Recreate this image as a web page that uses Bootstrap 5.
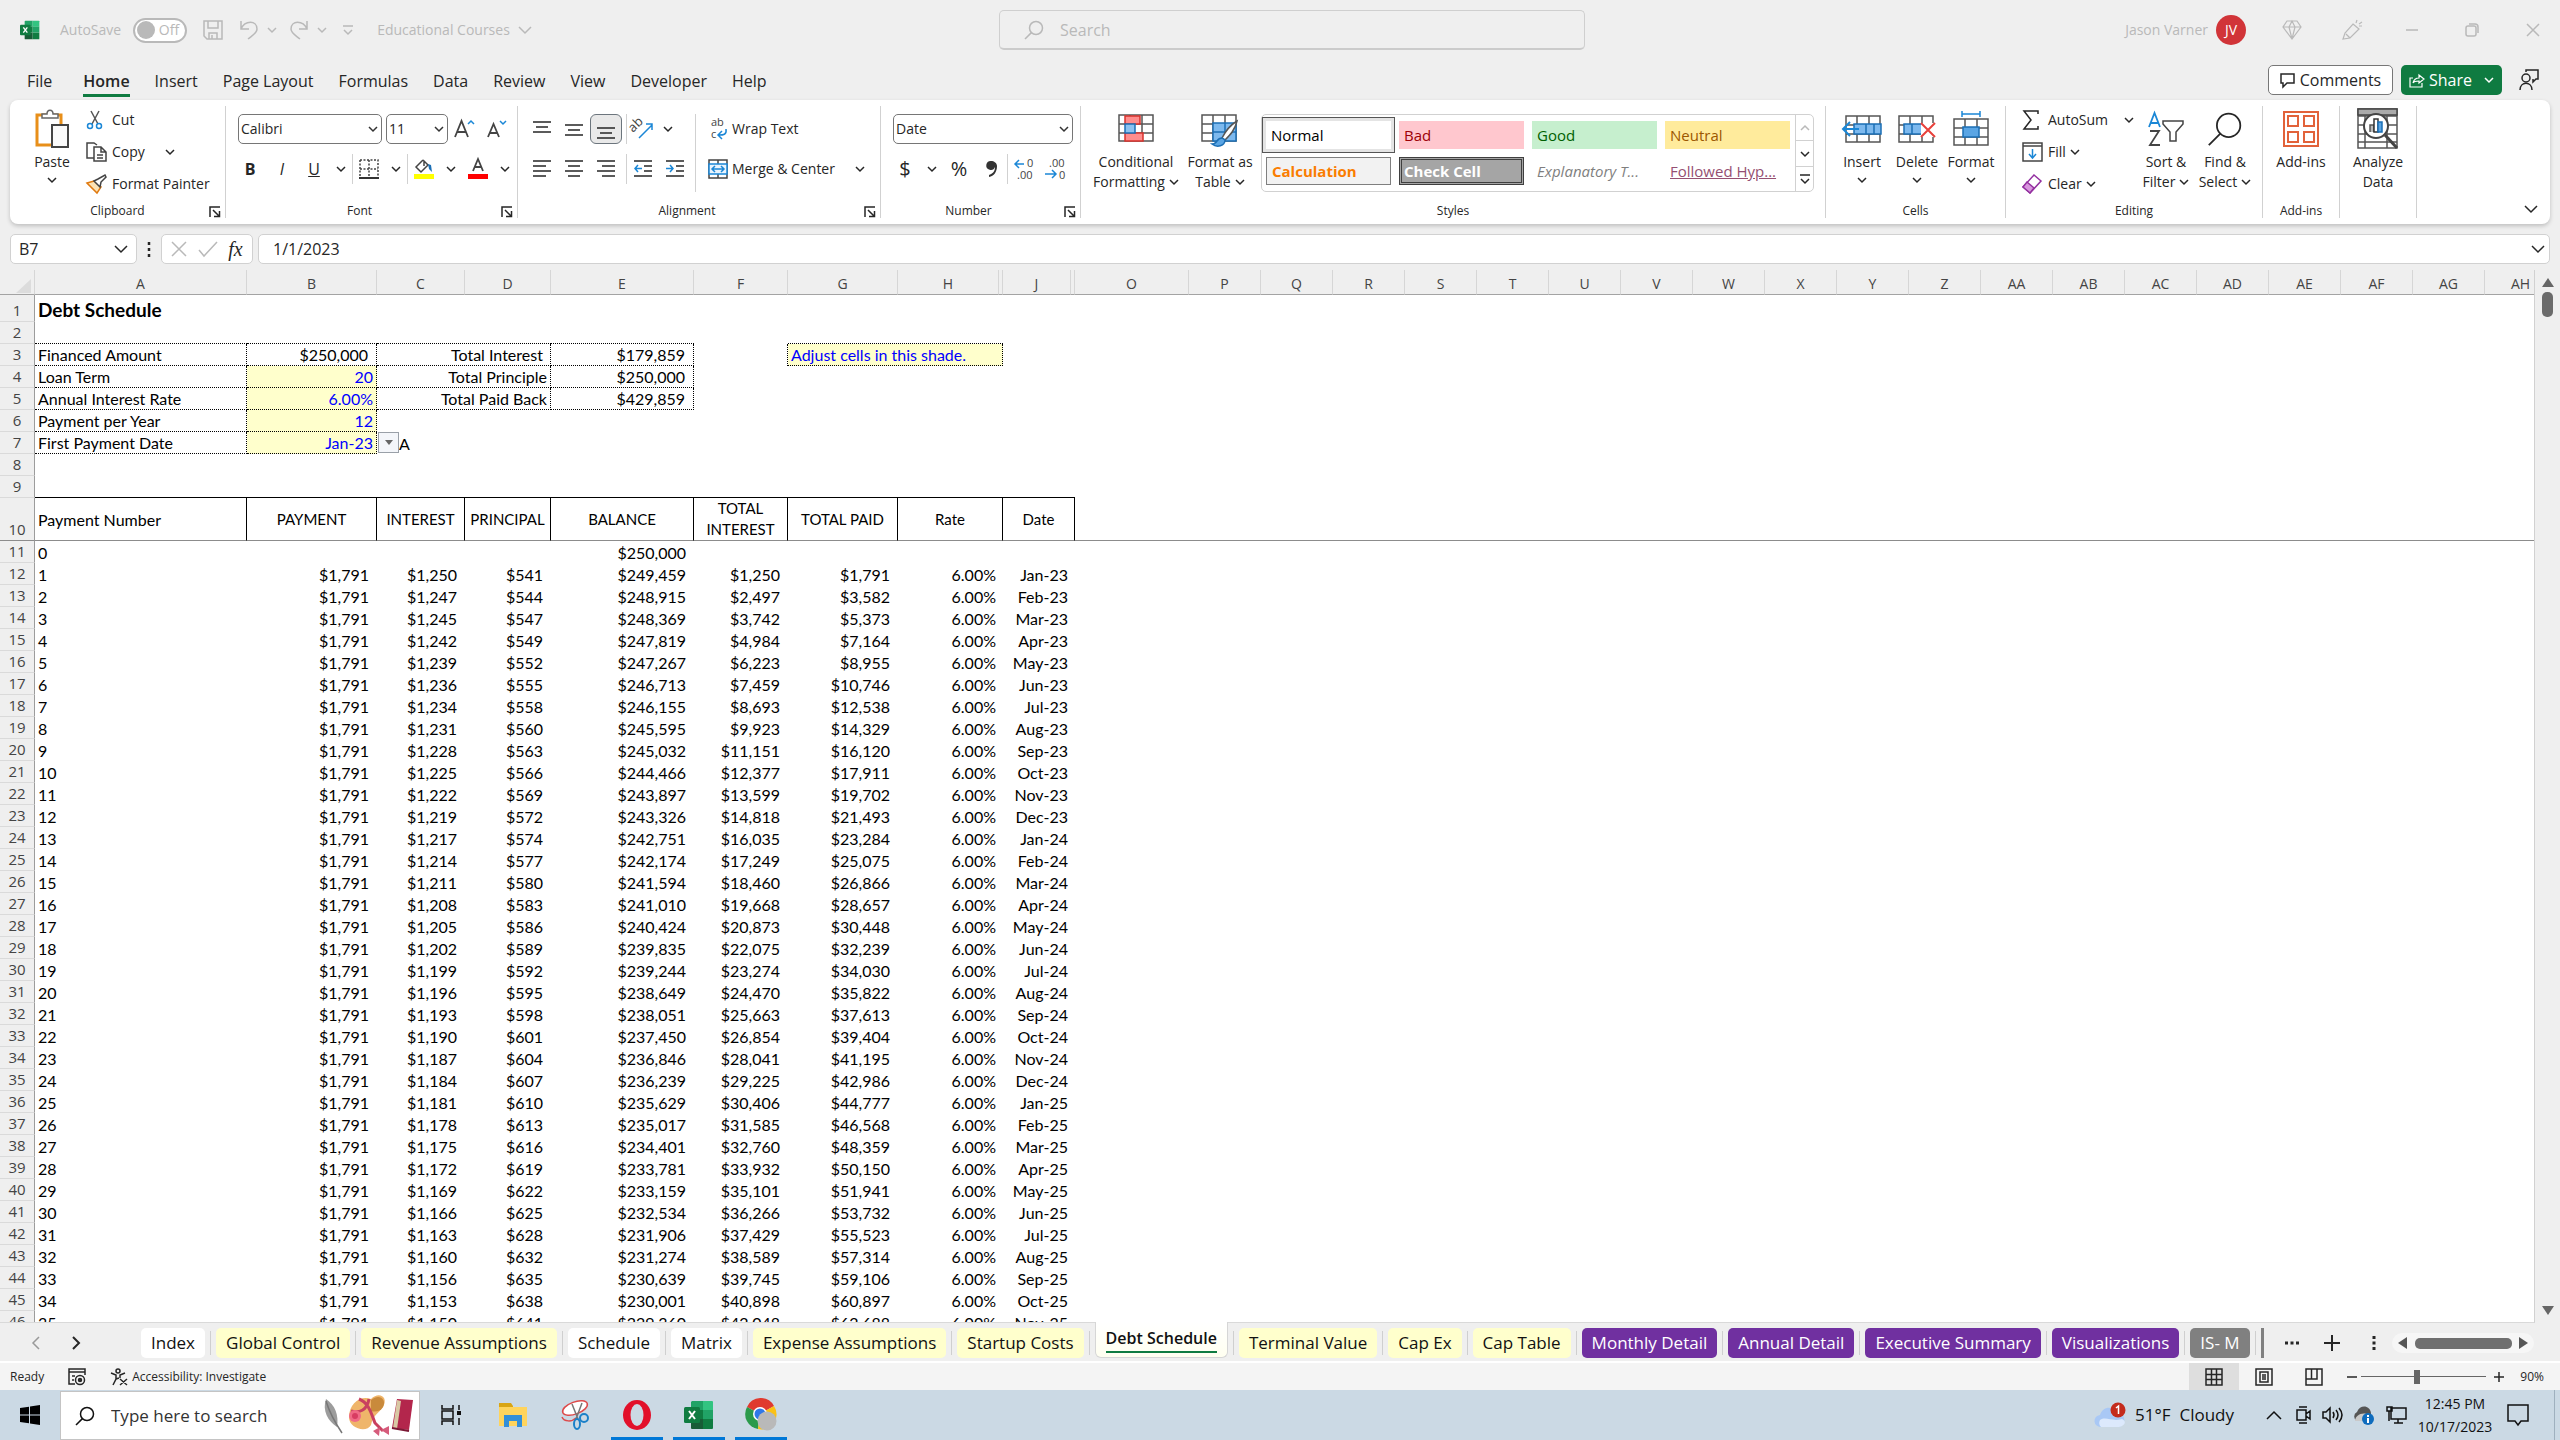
<!DOCTYPE html>
<html lang="en">
<head>
<meta charset="utf-8">
<meta name="viewport" content="width=device-width, initial-scale=1">
<title>Educational Courses - Excel</title>
<link href="https://cdn.jsdelivr.net/npm/bootstrap@5.3.0/dist/css/bootstrap.min.css" rel="stylesheet">
<style>
:root{--ui:"Open Sans","Noto Sans",sans-serif;--cell:Lato,"Open Sans",sans-serif;--green:#0f7b41;--ink:#262626;--dim:#b9b9b9;--line:#d1d1d1}
body{font-family:var(--ui);font-size:14px;line-height:20px;color:var(--ink);background:#efefef;overflow:hidden}
svg{flex:none;display:block;fill:none;stroke-width:1.5;overflow:visible}
svg:not([stroke]){stroke:currentColor}
button,input,select{font-family:inherit;color:inherit}
.plain{border:0;background:none;padding:0;display:flex;align-items:center;justify-content:center;white-space:nowrap}
.dim{color:var(--dim)}
.chev{width:10px;height:8px}
/* title bar */
.titlebar{height:60px;padding:0 20px}
.side{flex:1 1 0;min-width:0}
.toggle{width:54px;height:25px;border:2px solid var(--dim);border-radius:13px;background:#fff;padding:0 6px 0 2px;justify-content:space-between}
.knob{width:18px;height:18px;border-radius:50%;background:var(--dim)}
.searchbox{width:586px;height:40px;border:1px solid #cfcfcf;border-bottom:2px solid #cbcbcb;border-radius:5px;padding:0 24px;margin-left:24px}
.searchbox input,.findbox input,.fbar input{border:0;background:none;outline:0;padding:0;flex:1;min-width:0}
.searchbox input{font-size:16px}
input::placeholder{color:inherit;opacity:1}
.avatar{width:30px;height:30px;border-radius:50%;background:#d13438;color:#fff}
.winbtn{width:60px;height:30px}
/* ribbon tabs */
.tabrow{height:40px;padding:0 20px 0 27px}
.tabrow nav{gap:25px;font-size:16px;height:40px}
.tabrow nav a{color:var(--ink);text-decoration:none;padding-top:11px;height:37px}
.tabrow nav a.first{margin-right:6px}
.tabrow nav a.on{font-weight:600;border-bottom:3px solid var(--green)}
.outbtn{height:30px;border-radius:5px;font-size:16px}
.comments{width:125px;border:1px solid #777;background:#fff}
.share{width:101px;background:var(--green);color:#fff}
/* ribbon */
.ribbon{height:124px;margin:0 10px;border-radius:8px;background:#fff;box-shadow:0 2px 4px #0003;padding:6px 0}
.grp{border-right:1px solid var(--line);height:112px;position:relative}
.grp>.body{height:96px}
.grp>.foot{font-size:12px;line-height:18px;text-align:center;height:18px}
.grp .launch{position:absolute;right:4px;bottom:0}
.r32 .plain,.r32>div{height:32px}
.r32{margin-top:-2px}
.big{flex-direction:column;justify-content:flex-start;line-height:20px}
.big .ico{height:46px;display:flex;align-items:center}
.two{padding-top:8px;gap:10px}
.two>div{height:30px}
.vline{width:1px;height:30px;background:var(--line)}
.pick{height:30px;border:1px solid #767676;border-radius:5px;background:#fff url("data:image/svg+xml,%3Csvg xmlns='http://www.w3.org/2000/svg' width='10' height='8' fill='none' stroke='%23333' stroke-width='1.5'%3E%3Cpath d='M1 2l4 4 4-4'/%3E%3C/svg%3E") no-repeat right 3px center;appearance:none;padding:0 2px;color:var(--ink)}
.w32{width:32px;height:30px}
.w22{width:22px;height:30px}
.gallery{border:1px solid var(--line);border-radius:5px;height:78px;width:553px;margin-top:8px}
.swatches{display:grid;grid-template-columns:repeat(4,125px);gap:8px;padding:6px 4px}
.sw{height:28px;padding:0 5px;border:0;text-align:left;font-size:15px;line-height:26px;white-space:nowrap}
.sw.normal{background:#fff;color:#000;outline:1px solid #555;box-shadow:0 0 0 3px #e4e4e4;outline-offset:3px}
.sw.check{background:#a5a5a5;color:#fff;border:3px double #3f3f3f;line-height:22px;padding:0 2px}
.gscroll{width:18px;border-left:1px solid var(--line)}
.gscroll button{height:26px;border-bottom:1px solid var(--line)}
/* formula bar */
.fbar{padding:10px 10px 6px;gap:5px}
.fbar>div.box{height:30px;border:1px solid var(--line);border-radius:5px;background:#fff}
.fbar input{font-size:16px;line-height:28px}
/* sheet */
.sheet{flex:1 1 0;min-height:0;overflow:hidden}
.gridwrap{flex:1;overflow:hidden;background:#fff;border-right:1px solid var(--line);border-bottom:1px solid #d9d9d9}
.xl{table-layout:fixed;border-collapse:separate;border-spacing:0;font-family:var(--cell);font-size:16px;line-height:21px;color:#000}
.xl td,.xl th{padding:0 3px 0 3px;height:22px;vertical-align:bottom;white-space:nowrap;font-weight:400}
.xl thead th{height:25px;background:#efefef;color:#444;text-align:center;border-bottom:1px solid #a3a3a3;border-right:1px solid #d6d6d6;font-family:var(--ui);font-size:14px;padding:0}
.xl tbody th{background:#efefef;color:#444;text-align:center;border-bottom:1px solid #dadada;border-right:1px solid #9c9c9c;font-family:var(--ui);font-size:15px;padding:0}
.xl td.n{text-align:right}
.xl td.cur{text-align:right;padding-right:8px}
.xl .inp{background:#ffffcc;color:#00f}
.xl .db{border-bottom:1px dotted #000}
.xl .dr{border-right:1px dotted #000}
.xl .sb{border-bottom:1px solid #000}
.xl tr.head td{height:43px;font-size:15px;vertical-align:middle;text-align:center;white-space:normal;border-right:1px solid #000;border-bottom:1px solid #8c8c8c;padding:0}
.xl tr.head td:nth-child(2){text-align:left;padding-left:3px;font-size:16px}
.xl tr.head td.rest{border-right:0}
.xl tr.head th{border-bottom:1px solid #8c8c8c}
.ddl{position:absolute;left:1px;top:0;width:21px;height:21px;border:1px solid #9aa0a8;background:#f4f6fa}
.vscroll{width:25px}
.thumb{width:11px;height:25px;border-radius:5px;background:#6b6b6b}
/* sheet tabs */
.sheettabs{height:40px;padding:5px 26px 0 0;border-bottom:2px solid #fff}
.stab{height:30px;border-radius:5px;padding:0 10px;font-size:17px;color:#111;text-decoration:none;line-height:30px;white-space:nowrap;background:#fff}
.stab.y{background:#ffffcc}.stab.p{background:#7030a0;color:#fff}.stab.g{background:#808080;color:#fff}
.stab.on{height:36px;margin-top:-6px;padding:4px 10px 0;border:1px solid #d6d6d6;border-top:0;border-radius:0 0 6px 6px;font-weight:600;font-size:16px;line-height:25px;background:linear-gradient(#fff,#fffff0)}
.stab.on span{display:block;border-bottom:2px solid var(--green)}
.sep{width:1px;height:24px;background:#cfcfcf;margin:3px 5px 0}
.hscroll{width:142px;height:20px;border-radius:10px;background:#f6f6f6;padding:0 6px}
.hscroll span{width:97px;height:11px;border-radius:5px;background:#6f6f6f}
/* status */
.status{height:27px;background:#f4f4f4;font-size:12px;padding-left:10px}
.viewbtn{width:50px;height:27px}
.zoomer{width:125px;height:20px;appearance:none;background:linear-gradient(#666,#666) center/100% 1px no-repeat}
.zoomer::-webkit-slider-thumb{appearance:none;width:6px;height:14px;background:#666}
/* taskbar */
.taskbar{height:50px;background:#cbd9e4;color:#111}
.findbox{width:360px;height:49px;background:#fff;border:1px solid #c4c4c4;margin-top:1px;padding:0 4px 0 14px}
.findbox input{font-size:17px;color:#333}
.app{width:52px;height:50px;margin:0 5px}
.app.run{border-bottom:3px solid #0078d7;padding-top:3px}
.tray{font-size:17px}
</style>
<script src="https://cdn.jsdelivr.net/npm/bootstrap@5.3.0/dist/js/bootstrap.bundle.min.js"></script>
</head>
<body class="d-flex flex-column vh-100">
<svg width="0" height="0" class="position-absolute" aria-hidden="true">
  <symbol id="chev" viewBox="0 0 10 8"><path d="M1 2l4 4 4-4"/></symbol>
  <symbol id="mag" viewBox="0 0 20 20"><circle cx="12" cy="8" r="6.5"/><path d="M7.4 12.6L1 19"/></symbol>
  <symbol id="launch" viewBox="0 0 12 12"><path d="M1 11V1h10M4 4l6 6M10.500 5v5.500H5"/></symbol>
  <symbol id="xl" viewBox="0 0 30 30"><g stroke="none"><path fill="#21a366" d="M8 1h11v9H7V2z"/><path fill="#33c481" d="M19 1h9a1 1 0 011 1v8H19z"/><path fill="#107c41" d="M7 10h12v9H7z"/><path fill="#21a366" d="M19 10h10v9H19z"/><path fill="#185c37" d="M7 19h12v10H8a1 1 0 01-1-1z"/><path fill="#107c41" d="M19 19h10v9a1 1 0 01-1 1h-9z"/><rect x="0" y="7" width="16" height="16" rx="1.500" fill="#107c41"/></g><path d="M5 11l6 8M11 11l-6 8" stroke="#fff" stroke-width="2"/></symbol>
  <symbol id="cells" viewBox="0 0 36 28"><path d="M1 1h34v26H1zM1 10h34M1 19h34M12 1v26M24 1v26" stroke="#555"/></symbol>
</svg>

<header class="titlebar d-flex align-items-center dim">
  <div class="side d-flex align-items-center">
    <svg width="20" height="20"><use href="#xl"/></svg>
    <span class="ms-3 px-1">AutoSave</span>
    <button class="plain toggle dim ms-2" aria-label="AutoSave off"><span class="knob"></span><span>Off</span></button>
    <button class="plain ms-3" aria-label="Save"><svg width="20" height="20"><path d="M1 1h18v18H4l-3-3zM5 1v7h10V1M6 19v-6h8v6M9 15v4"/></svg></button>
    <button class="plain ms-3" aria-label="Undo"><svg width="20" height="20"><path d="M2 1v8h8M2 9c4-9 16-9 16 0 0 4-4 6-9 10"/></svg></button>
    <button class="plain ms-2" aria-label="Undo list"><svg class="chev"><use href="#chev"/></svg></button>
    <button class="plain ms-2 ps-1" aria-label="Redo"><svg width="20" height="20"><path d="M18 1v8h-8M18 9C14 0 2 0 2 9c0 4 4 6 9 10"/></svg></button>
    <button class="plain ms-2" aria-label="Redo list"><svg class="chev"><use href="#chev"/></svg></button>
    <button class="plain ms-3" aria-label="Customize toolbar"><svg width="10" height="12"><path d="M0 2h10M1 6l4 4 4-4"/></svg></button>
    <button class="plain dim gap-2 ms-4">Educational Courses <svg width="14" height="10"><path d="M1 2l6 6 6-6"/></svg></button>
  </div>
  <label class="searchbox d-flex align-items-center gap-3"><svg width="20" height="20"><use href="#mag"/></svg><input type="search" placeholder="Search" class="dim" aria-label="Search"></label>
  <div class="side d-flex align-items-center justify-content-end">
    <span>Jason Varner</span><span class="avatar d-flex align-items-center justify-content-center ms-2 me-3">JV</span>
    <button class="plain winbtn" aria-label="Premium"><svg width="20" height="20"><path d="M5 1h10l4 6-9 12L1 7zM1 7h18M7 7l3 12 3-12-3-6z" stroke-width="1.200"/></svg></button>
    <button class="plain winbtn" aria-label="Ideas"><svg width="20" height="20"><path d="M11 4l6 5-9 9-7 1 2-6zM4 14l4 4M14 3l1-3M17 4l3-2M17 6h3" stroke-width="1.200"/></svg></button>
    <button class="plain winbtn" aria-label="Minimize"><svg width="12" height="12"><path d="M0 6h12"/></svg></button>
    <button class="plain winbtn" aria-label="Restore"><svg width="14" height="14"><rect x="1" y="3" width="10" height="10" rx="2"/><path d="M4 1h6q3 0 3 3v6"/></svg></button>
    <button class="plain" aria-label="Close"><svg class="ms-4" width="14" height="14"><path d="M1 1l12 12M13 1L1 13"/></svg></button>
  </div>
</header>

<div class="tabrow d-flex align-items-center">
  <nav class="d-flex" aria-label="Ribbon tabs">
    <a href="#" class="first">File</a><a href="#" class="on">Home</a><a href="#">Insert</a><a href="#">Page Layout</a><a href="#">Formulas</a><a href="#">Data</a><a href="#">Review</a><a href="#">View</a><a href="#">Developer</a><a href="#">Help</a>
  </nav>
  <button class="plain outbtn comments ms-auto gap-1"><svg width="16" height="16"><path d="M1 2h13v9H7l-4 4v-4H1z"/></svg>Comments</button>
  <button class="plain outbtn share ms-2 gap-1"><svg width="16" height="16"><path d="M4 6H1v9h12v-4M4 11c1-4 4-5 6-5V3l5 4-5 4V9c-3 0-5 0-6 2z" stroke-width="1.200"/></svg>Share<svg class="chev ms-2"><use href="#chev"/></svg></button>
  <button class="plain ms-3" aria-label="Feedback"><svg width="22" height="22"><circle cx="8" cy="9" r="4"/><path d="M2 21c0-9 12-9 12 0M8 3V1h12v9h-2l-3 3v-3"/></svg></button>
</div>

<section class="ribbon d-flex position-relative" aria-label="Ribbon">
  <div class="grp" style="width:216px"><div class="body d-flex">
    <button class="plain big ps-4"><span class="ico"><svg width="36" height="40"><path d="M3 6h24v30H3z" stroke="#e88f1a" stroke-width="3" fill="#fff"/><path d="M8 9V5h5c0-5 6-5 6 0h5v4z" stroke="#666" fill="#fff"/><path d="M18 16h16v22H18z" stroke="#444" stroke-width="2" fill="#fafafa"/></svg></span><span>Paste</span><svg class="chev mt-1"><use href="#chev"/></svg></button>
    <div class="r32 ps-3 d-flex flex-column align-items-start">
      <button class="plain gap-2"><svg width="18" height="20"><path d="M5 1l7 13M13 1L6 14" stroke="#555"/><circle cx="4" cy="16" r="2.500" stroke="#1b87d6"/><circle cx="13" cy="16" r="2.500" stroke="#1b87d6"/></svg>Cut</button>
      <button class="plain gap-1"><svg width="22" height="20"><path d="M8 16H1V1h7l3 2M8 5h7l5 5v9H8zM15 5v5h5M11 13h6M11 16h6" stroke="#444"/></svg>Copy<svg class="chev ms-3"><use href="#chev"/></svg></button>
      <button class="plain gap-1"><svg width="22" height="20"><path d="M1 9l7-2 7 6-4 6z" stroke="#e07a10" fill="#fde3b5"/><path d="M8 7l4-2 7-4 1 2-5 5-1 5z" stroke="#444" fill="#fff"/></svg>Format Painter</button>
    </div></div><div class="foot">Clipboard</div>
    <button class="plain launch" aria-label="Clipboard settings"><svg width="12" height="12"><use href="#launch"/></svg></button></div>

  <div class="grp" style="width:292px"><div class="body two d-flex flex-column ps-2">
    <div class="d-flex align-items-center ps-1"><select class="pick" style="width:144px" aria-label="Font"><option>Calibri</option></select><select class="pick ms-1" style="width:62px" aria-label="Font size"><option>11</option></select>
      <button class="plain w32" aria-label="Grow font"><svg width="22" height="22"><path d="M2 19L8.500 3 15 19M4 14h9" stroke="#444" stroke-width="1.800"/><path d="M15 6l3-3 3 3" stroke="#1b87d6"/></svg></button><button class="plain w32" aria-label="Shrink font"><svg width="22" height="22"><path d="M3 19L8.500 6 14 19M5 15h7" stroke="#444" stroke-width="1.800"/><path d="M15 3l3 3 3-3" stroke="#1b87d6"/></svg></button></div>
    <div class="d-flex align-items-center"><button class="plain w32 fw-bold fs-6">B</button><button class="plain w32 fst-italic fs-6">I</button><button class="plain w32 fs-6 text-decoration-underline">U</button><button class="plain w22" aria-label="Underline styles"><svg class="chev"><use href="#chev"/></svg></button><span class="vline"></span>
      <button class="plain w32" aria-label="Borders"><svg width="20" height="20"><path d="M1 1h18v18M1 1v18M10 1v18M1 10h18" stroke="#444" stroke-dasharray="2 1.500"/><path d="M0 19h20" stroke="#333" stroke-width="2"/></svg></button><button class="plain w22" aria-label="Border styles"><svg class="chev"><use href="#chev"/></svg></button><span class="vline"></span>
      <button class="plain w32" aria-label="Fill color"><svg width="22" height="22"><path d="M10 2L3 9l5 5 7-7-4-4v5" stroke="#444"/><path d="M15 6l3 1 1 7-3-3z" fill="#1b6fb5" stroke="none"/><path fill="#ff0" stroke="none" d="M1 16h20v5H1z"/></svg></button><button class="plain w22" aria-label="Fill colors"><svg class="chev"><use href="#chev"/></svg></button>
      <button class="plain w32" aria-label="Font color"><svg width="22" height="22"><path d="M6 13L11 1l5 12M7.500 9h7" stroke="#444" stroke-width="1.800"/><path fill="red" stroke="none" d="M1 16h20v5H1z"/></svg></button><button class="plain w22" aria-label="Font colors"><svg class="chev"><use href="#chev"/></svg></button></div>
    </div><div class="foot pe-4">Font</div>
    <button class="plain launch" aria-label="Font settings"><svg width="12" height="12"><use href="#launch"/></svg></button></div>

  <div class="grp" style="width:363px"><div class="body d-flex">
    <div class="two d-flex flex-column ps-2">
      <div class="d-flex align-items-center"><button class="plain w32" aria-label="Top align"><svg width="18" height="18"><path d="M0 2h18M3 7h12M0 12h18"/></svg></button><button class="plain w32" aria-label="Middle align"><svg width="18" height="18"><path d="M0 5h18M3 10h12M0 15h18"/></svg></button><button class="plain w32 border border-secondary rounded" style="background:#e9e9e9" aria-label="Bottom align"><svg width="18" height="18"><path d="M0 8h18M3 13h12M0 18h18"/></svg></button><span class="vline ms-1"></span>
        <button class="plain w32" aria-label="Orientation"><svg width="22" height="22"><text x="-1" y="10" transform="rotate(-45 6 10)" font-size="13" fill="#444" stroke="none">ab</text><path d="M7 20L20 7M14 6h6v6" stroke="#1b87d6"/></svg></button><svg class="chev ms-1"><use href="#chev"/></svg></div>
      <div class="d-flex align-items-center"><button class="plain w32" aria-label="Align left"><svg width="18" height="18"><path d="M0 1h18M0 6h13M0 11h18M0 16h13"/></svg></button><button class="plain w32" aria-label="Center"><svg width="18" height="18"><path d="M0 1h18M3 6h12M0 11h18M3 16h12"/></svg></button><button class="plain w32" aria-label="Align right"><svg width="18" height="18"><path d="M0 1h18M5 6h13M0 11h18M5 16h13"/></svg></button><span class="vline ms-1"></span>
        <button class="plain w32" aria-label="Decrease indent"><svg width="18" height="18"><path d="M0 1h18M10 6h8M10 11h8M0 16h18"/><path d="M8 8.500H1M4 5L1 8.500 4 12" stroke="#1b87d6"/></svg></button><button class="plain w32" aria-label="Increase indent"><svg width="18" height="18"><path d="M0 1h18M10 6h8M10 11h8M0 16h18"/><path d="M0 8.500h7M4 5l3 3.500L4 12" stroke="#1b87d6"/></svg></button></div>
    </div>
    <span class="vline mt-2 ms-1" style="height:78px"></span>
    <div class="two d-flex flex-column ps-2 ms-1">
      <button class="plain gap-1 justify-content-start w-100" style="height:30px"><svg width="20" height="22"><text x="3" y="8" font-size="11" fill="#444" stroke="none">ab</text><text x="3" y="20" font-size="11" fill="#444" stroke="none">c</text><path d="M18 11c1 6-3 6-7 6M14 13l-4 4 4 4" stroke="#1b87d6"/></svg>Wrap Text</button>
      <button class="plain gap-1" style="height:30px"><svg width="20" height="20"><path d="M1 1h18v18H1zM10 1v4M10 15v4" stroke="#444"/><path d="M1 5h18v10H1z" fill="#eaf4fd" stroke="#1b87d6"/><path d="M4 10h12M7 7l-3 3 3 3M13 7l3 3-3 3" stroke="#1b87d6"/></svg>Merge &amp; Center<svg class="chev ms-3"><use href="#chev"/></svg></button>
    </div></div><div class="foot pe-4">Alignment</div>
    <button class="plain launch" aria-label="Alignment settings"><svg width="12" height="12"><use href="#launch"/></svg></button></div>

  <div class="grp" style="width:200px"><div class="body two d-flex flex-column ps-2">
    <div class="ps-1"><select class="pick" style="width:180px" aria-label="Number format"><option>Date</option></select></div>
    <div class="d-flex align-items-center"><button class="plain w32 fs-5" aria-label="Accounting">$</button><button class="plain w22" aria-label="Currencies"><svg class="chev"><use href="#chev"/></svg></button><button class="plain w32 fs-5" aria-label="Percent">%</button><button class="plain w32" aria-label="Comma style"><svg width="12" height="20"><path d="M6 2a4.500 4.500 0 104 6c0 5-3 7-6 8v2c5-1 8-5 8-11 0-3-3-5-6-5z" fill="#333" stroke="none"/></svg></button><span class="vline"></span>
      <button class="plain w32" aria-label="Increase decimal"><svg width="22" height="22"><text x="14" y="9" font-size="11" fill="#444" stroke="none">0</text><text x="4" y="21" font-size="11" fill="#444" stroke="none">.00</text><path d="M11 6H2M6 2L2 6l4 4" stroke="#1b87d6"/></svg></button><button class="plain w32" aria-label="Decrease decimal"><svg width="22" height="22"><text x="4" y="9" font-size="11" fill="#444" stroke="none">.00</text><text x="14" y="21" font-size="11" fill="#444" stroke="none">0</text><path d="M0 16h11M7 12l4 4-4 4" stroke="#1b87d6"/></svg></button></div>
    </div><div class="foot pe-4">Number</div>
    <button class="plain launch" aria-label="Number settings"><svg width="12" height="12"><use href="#launch"/></svg></button></div>

  <div class="grp" style="width:745px"><div class="body d-flex ps-2">
    <button class="plain big" style="width:94px"><span class="ico"><svg width="36" height="30"><use href="#cells" width="36" height="28"/><path d="M7 2h15v8H7zM7 19h18v8H7z" fill="#ff8d8d" stroke="#d8322c"/><path d="M7 10h10v9H7z" fill="#8dc2f0" stroke="#1b6fb5"/></svg></span><span>Conditional</span><span class="d-flex align-items-center gap-1">Formatting <svg class="chev"><use href="#chev"/></svg></span></button>
    <button class="plain big" style="width:74px"><span class="ico"><svg width="38" height="36"><use href="#cells" y="3" width="36" height="28"/><path d="M12 12h23v18H12zM24 12v18M12 21h23" fill="#7db9ee" stroke="#1b6fb5"/><path d="M36 10c-8 5-12 11-15 17l3 2c5-5 10-10 12-19z" fill="#fff" stroke="#555"/><path d="M21 27c-6 0-4 6-10 6 5 4 13 2 13-4z" fill="#5aa5e4" stroke="#1b6fb5"/></svg></span><span>Format as</span><span class="d-flex align-items-center gap-1">Table <svg class="chev"><use href="#chev"/></svg></span></button>
    <div class="gallery d-flex ms-1"><div class="swatches flex-grow-1">
      <button class="sw normal">Normal</button><button class="sw" style="background:#ffc7ce;color:#9c0006">Bad</button><button class="sw" style="background:#c6efce;color:#006100">Good</button><button class="sw" style="background:#ffeb9c;color:#9c5700">Neutral</button>
      <button class="sw fw-bold" style="background:#f2f2f2;color:#fa7d00;border:1px solid #7f7f7f">Calculation</button><button class="sw fw-bold check">Check Cell</button><button class="sw fst-italic" style="background:#fff;color:#7f7f7f">Explanatory T...</button><button class="sw text-decoration-underline" style="background:#fff;color:#954f72">Followed Hyp...</button></div>
      <div class="gscroll"><button class="plain w-100 dim" aria-label="Scroll up"><svg width="10" height="8"><path d="M1 6l4-4 4 4"/></svg></button><button class="plain w-100" aria-label="Scroll down"><svg class="chev"><use href="#chev"/></svg></button><button class="plain w-100 border-0" aria-label="More styles"><svg width="10" height="12"><path d="M0 1h10M1 5l4 4 4-4"/></svg></button></div></div>
    </div><div class="foot">Styles</div></div>

  <div class="grp" style="width:180px"><div class="body d-flex ps-2">
    <button class="plain big" style="width:56px"><span class="ico"><svg width="40" height="28"><use href="#cells" x="3" width="36" height="28"/><path d="M12 9h27v10H12zM24 9v10M32 9v10" fill="#7db9ee" stroke="#1b6fb5"/><path d="M17 14H2M8 7l-7 7 7 7" stroke="#1b87d6" stroke-width="2"/></svg></span><span>Insert</span><svg class="chev mt-1"><use href="#chev"/></svg></button>
    <button class="plain big" style="width:54px"><span class="ico"><svg width="38" height="28"><use href="#cells" width="36" height="28"/><path d="M6 9h18v10H6zM14 9v10" fill="#7db9ee" stroke="#1b6fb5"/><path d="M23 8h14v14H23z" fill="#fff" stroke="none"/><path d="M23 8l14 14M37 8L23 22" stroke="#e8413b" stroke-width="2"/></svg></span><span>Delete</span><svg class="chev mt-1"><use href="#chev"/></svg></button>
    <button class="plain big" style="width:54px"><span class="ico"><svg width="36" height="36"><use href="#cells" y="7" width="36" height="28"/><path d="M10 16h16v10H10z" fill="#5aa5e4" stroke="#1b6fb5"/><path d="M9 3h18M9 0v6M27 0v6" stroke="#1b87d6"/></svg></span><span>Format</span><svg class="chev mt-1"><use href="#chev"/></svg></button>
    </div><div class="foot">Cells</div></div>

  <div class="grp" style="width:257px"><div class="body d-flex ps-3">
    <div class="r32 d-flex flex-column align-items-start" style="width:112px">
      <button class="plain gap-2"><svg width="18" height="20"><path d="M16 4V1H2l7 9-7 9h14v-3"/></svg>AutoSum<svg class="chev ms-2"><use href="#chev"/></svg></button>
      <button class="plain gap-1"><svg width="22" height="20"><path d="M1 1h19v18H1zM1 4h19" stroke="#444"/><path d="M10.500 7v9M7 12l3.500 4 3.500-4" stroke="#1b87d6"/></svg>Fill<svg class="chev"><use href="#chev"/></svg></button>
      <button class="plain gap-1"><svg width="22" height="20"><path d="M1 13L12 1l7 6L8 19z" stroke="#9330a0"/><path d="M1 13l4-5 7 6-4 5z" fill="#d896de" stroke="#9330a0"/></svg>Clear<svg class="chev"><use href="#chev"/></svg></button>
    </div>
    <button class="plain big" style="width:64px"><span class="ico"><svg width="36" height="36"><path d="M1 16L6.500 2 12 16M3 12h7" stroke="#1b87d6" stroke-width="1.800"/><path d="M2 20h9L2 34h10" stroke="#444" stroke-width="1.800"/><path d="M15 10h20v3l-7 8v9h-6v-9l-7-8z" stroke="#444"/></svg></span><span>Sort &amp;</span><span class="d-flex align-items-center gap-1">Filter <svg class="chev"><use href="#chev"/></svg></span></button>
    <button class="plain big" style="width:54px"><span class="ico"><svg width="36" height="36"><use href="#mag" width="36" height="36" stroke-width="1"/></svg></span><span>Find &amp;</span><span class="d-flex align-items-center gap-1">Select <svg class="chev"><use href="#chev"/></svg></span></button>
    </div><div class="foot">Editing</div></div>

  <div class="grp" style="width:77px"><div class="body"><button class="plain big w-100"><span class="ico"><svg width="36" height="36"><path d="M1 1h34v34H1z" stroke="#e2623a" stroke-width="2"/><path d="M5 5h10v10H5zM21 5h10v10H21zM5 21h10v10H5zM21 21h10v10H21z" stroke="#e2623a" stroke-width="2"/></svg></span><span>Add-ins</span></button></div><div class="foot">Add-ins</div></div>
  <div class="grp" style="width:77px"><div class="body"><button class="plain big w-100"><span class="ico"><svg width="42" height="42"><path d="M1 1h39v39H1zM1 8h39M1 17h39M1 26h39M1 34h39M8 8v32M30 8v32" stroke="#555"/><path d="M1 1h39v6H1z" fill="#aaa" stroke="#444"/><circle cx="19" cy="18" r="12" fill="#fff" stroke="#444" stroke-width="2"/><path d="M28 27l12 13" stroke="#444" stroke-width="3"/><path d="M13 24v-7h4v7" fill="#bbb" stroke="#555"/><path d="M17 24V11h4v13z" fill="#fff" stroke="#333"/><path d="M21 24V14h4v10z" fill="#5aa5e4" stroke="#1b6fb5"/></svg></span><span>Analyze</span><span>Data</span></button></div></div>
  <button class="plain ms-auto me-2 mb-1 align-self-end pe-1" aria-label="Collapse ribbon"><svg width="14" height="10"><path d="M1 2l6 6 6-6"/></svg></button>
</section>

<div class="fbar d-flex align-items-center">
  <div class="box d-flex align-items-center px-2" style="width:127px"><input aria-label="Name box" value="B7"><svg width="14" height="10"><path d="M1 2l6 6 6-6"/></svg></div>
  <svg class="mx-1" width="6" height="16"><path d="M3 1v3M3 7v3M3 13v3" stroke-width="2.500"/></svg>
  <div class="box d-flex align-items-center justify-content-around px-1" style="width:92px"><button class="plain dim" aria-label="Cancel"><svg width="16" height="16"><path d="M1 1l14 14M15 1L1 15"/></svg></button><button class="plain dim" aria-label="Enter"><svg width="20" height="16"><path d="M1 9l5 6L19 1"/></svg></button><button class="plain fst-italic fs-5" style="font-family:'Liberation Serif',serif" aria-label="Insert function">fx</button></div>
  <div class="box d-flex align-items-center flex-grow-1 pe-1" style="padding-left:14px"><input aria-label="Formula" value="1/1/2023"><svg width="14" height="10"><path d="M1 2l6 6 6-6"/></svg></div>
</div>

<main class="sheet d-flex">
  <div class="gridwrap"><table class="xl"><colgroup id="cols"></colgroup><thead><tr id="letters"></tr></thead><tbody id="rows"></tbody></table></div>
  <div class="vscroll d-flex flex-column align-items-center py-2"><svg width="12" height="10"><path d="M6 0l6 9H0z" fill="#666" stroke="none"/></svg><span class="thumb mt-1 mb-auto"></span><svg width="12" height="10"><path d="M6 10l6-9H0z" fill="#666" stroke="none"/></svg></div>
</main>

<footer>
  <div class="sheettabs d-flex align-items-start">
    <button class="plain" style="width:72px;height:30px" aria-label="Previous sheets"><svg width="8" height="14"><path d="M7 1L1 7l6 6" stroke="#999"/></svg></button><button class="plain" style="width:8px;height:30px" aria-label="Next sheets"><svg width="8" height="14"><path d="M1 1l6 6-6 6" stroke-width="2"/></svg></button>
    <nav class="d-flex" id="tabs" style="margin-left:61px" aria-label="Sheets"></nav>
    <div class="d-flex align-items-center ms-auto" style="height:30px">
      <button class="plain" aria-label="More sheets"><svg width="16" height="4"><path d="M1 2h3M6.500 2h3M12 2h3" stroke-width="3"/></svg></button>
      <button class="plain mx-4" aria-label="New sheet"><svg width="16" height="16"><path d="M8 0v16M0 8h16" stroke-width="2"/></svg></button>
      <svg class="mx-2" width="4" height="14"><path d="M2 0v3M2 5.500v3M2 11v3" stroke-width="3"/></svg>
      <div class="hscroll d-flex align-items-center justify-content-between ms-2"><svg width="9" height="12"><path d="M0 6l9-6v12z" fill="#555" stroke="none"/></svg><span></span><svg width="9" height="12"><path d="M9 6L0 0v12z" fill="#555" stroke="none"/></svg></div>
    </div>
  </div>
  <div class="status d-flex align-items-center">
    <span>Ready</span>
    <svg class="ms-4" width="18" height="18"><path d="M7 16H1V1h16v6M1 4h16M4 8h3M4 12h2"/><circle cx="12" cy="12" r="4.500"/><circle cx="12" cy="12" r="1.500" fill="#333"/></svg>
    <button class="plain ms-4 gap-1"><svg width="18" height="18"><circle cx="8" cy="3" r="2"/><path d="M1 5l5 2v4l-3 6M15 5l-5 2v3M6 11l3-1M10 11l7 6M17 11l-7 6"/></svg>Accessibility: Investigate</button>
    <div class="ms-auto d-flex align-items-center">
      <button class="plain viewbtn" style="background:#dedede" aria-label="Normal view"><svg width="18" height="18"><path d="M1 1h16v16H1zM1 6.500h16M1 11.500h16M6.500 1v16M11.500 1v16"/></svg></button>
      <button class="plain viewbtn" aria-label="Page layout"><svg width="18" height="18"><path d="M1 1h16v16H1zM5 4h8v10H5zM7 7h4M7 9h4M7 11h4"/></svg></button>
      <button class="plain viewbtn" aria-label="Page break preview"><svg width="18" height="18"><path d="M1 1h16v16H1zM1 11h11V1M6.500 1v10"/></svg></button>
      <button class="plain ms-2 me-1" aria-label="Zoom out"><svg width="10" height="10"><path d="M0 5h10"/></svg></button>
      <input type="range" class="zoomer" min="10" max="192" value="90" aria-label="Zoom">
      <button class="plain mx-2" aria-label="Zoom in"><svg width="10" height="10"><path d="M0 5h10M5 0v10"/></svg></button>
      <span class="ms-2 me-3">90%</span>
    </div>
  </div>
  <div class="taskbar d-flex align-items-center">
    <button class="plain" style="width:60px" aria-label="Start"><svg width="20" height="20"><path d="M0 3l9-1.300V9.500H0zM10 1.500L20 0v9.500H10zM0 10.500h9v7.800L0 17zM10 10.500h10V20l-10-1.500z" fill="#000" stroke="none"/></svg></button>
    <label class="findbox d-flex align-items-center gap-3"><svg width="20" height="20"><use href="#mag"/></svg><input type="search" placeholder="Type here to search" aria-label="Type here to search">
      <svg width="94" height="42" stroke="none"><path d="M5 4c-4 12 2 22 11 28 2-12-2-22-11-28z" fill="#9c9c9c"/><path d="M5 6c3 10 8 20 16 32" stroke="#777"/><path d="M28 22c0-14 12-22 22-18 8-8 18-2 12 8-4 6-10 8-12 18-4 8-22 4-22-8z" fill="#efb56a"/><path d="M50 5c8-7 16-1 12 7-3 5-8 5-12 4z" fill="#c98a3c"/><path d="M38 4c10 4 12 14 16 24l8 8M30 16c8 2 16 0 18-12" stroke="#c9405f" stroke-width="3"/><circle cx="34" cy="21" r="6" fill="#f06a86"/><circle cx="34" cy="21" r="3" fill="#d83c62"/><path d="M52 36l7-4-1 9zM60 35l8-4 0 9z" fill="#d65c7c"/><path d="M76 4l16 1-4 30-17-2z" fill="#b3264c"/><path d="M72 33l4-28 4 1-4 28z" fill="#d8c8a4"/><path d="M71 33l17 3" stroke="#7b1835" stroke-width="2"/></svg></label>
    <button class="plain app" aria-label="Task view"><svg width="22" height="20" stroke="#111"><path d="M2 0v4h11V0M2 20v-4h11v4M2 6h11v8H2zM19 0v5M19 13v7"/><path d="M17 6h4v4h-4z" fill="#111" stroke="none"/></svg></button>
    <button class="plain app" aria-label="File Explorer"><svg width="28" height="26" stroke="none"><path d="M0 1h12l2 3v4H0z" fill="#d9a514"/><path d="M0 5h28v19H0z" fill="#ffd45c"/><path d="M5 25V13h18v12h-5v-6h-8v6z" fill="#338fd8"/></svg></button>
    <button class="plain app" aria-label="Snipping Tool"><svg width="30" height="30"><ellipse cx="15" cy="8" rx="13" ry="6" fill="#fff" stroke="#dd4a4a" transform="rotate(-20 15 8)"/><path d="M2 17c2 5 10 5 14 1" stroke="#dd4a4a"/><path d="M12 4l6 15M22 3l-6 16" stroke="#777"/><circle cx="24" cy="18" r="4" stroke="#1b80c8" stroke-width="2"/><ellipse cx="17" cy="24" rx="3" ry="5" stroke="#1b80c8" stroke-width="2"/></svg></button>
    <button class="plain app run" aria-label="Opera"><svg width="30" height="30" stroke="none"><ellipse cx="15" cy="15" rx="14" ry="15" fill="#e2102a"/><ellipse cx="15" cy="15" rx="6.500" ry="11" fill="#cbd9e4"/></svg></button>
    <button class="plain app run" aria-label="Excel"><svg width="30" height="30"><use href="#xl"/></svg></button>
    <button class="plain app run" aria-label="Chrome"><svg width="32" height="32" stroke="none"><path d="M15 15L2 8a15 15 0 0127-1z" fill="#e03a2f"/><path d="M15 15L2 8a15 15 0 0011 22z" fill="#2b9a4b"/><path d="M15 15l14-8a15 15 0 01-16 23z" fill="#fbc116"/><circle cx="15" cy="15" r="7" fill="#fff"/><circle cx="15" cy="15" r="5.500" fill="#3078e8"/><circle cx="22" cy="22" r="9.500" fill="#b9b9b9"/></svg></button>
    <div class="tray ms-auto d-flex align-items-center gap-2">
      <button class="plain gap-2"><svg width="32" height="28" stroke="none"><path d="M6 26a6 6 0 01-1-12c2-8 12-10 16-3 10 0 11 13 3 15z" fill="#a9c8f5"/><path d="M6 26a6 6 0 01-1-7c6-4 12 2 22-1 5 2 3 7-3 8z" fill="#dce9fc"/><circle cx="23" cy="9" r="7.500" fill="#c42b1c"/><path d="M21 7l2.500-2v8" stroke="#fff" stroke-width="1.500"/></svg>51°F&nbsp; Cloudy</button>
      <button class="plain ms-4 me-1" aria-label="Hidden icons"><svg width="16" height="10"><path d="M1 9l7-7 7 7"/></svg></button>
      <svg width="20" height="20" stroke="#111"><path d="M5 2h8M5 18h8M3 5h9v10H3zM12 9l4-3v8l-4-3"/></svg>
      <svg width="22" height="20" stroke="#111"><path d="M1 7h3l4-4v14l-4-4H1zM11 7q2 3 0 6M14 5q4 5 0 10M17 3q6 7 0 14"/></svg>
      <svg width="22" height="20" stroke="none"><path d="M5 16a5 5 0 010-9c3-8 13-7 14 1v8z" fill="#555"/><path d="M3 16c0-6 8-10 14-6v6z" fill="#c9c9c9"/><circle cx="16" cy="14" r="6" fill="#0f6cbd"/><path d="M16 10v2M16 13v5" stroke="#fff" stroke-width="2"/></svg>
      <svg class="ms-1" width="22" height="20" stroke="#111"><path d="M5 3h15v11H5zM12 14v4M8 18h9M1 2h5v4H1zM3 6v10"/></svg>
      <div class="text-center" style="font-size:14px;line-height:23px;width:78px">12:45 PM<br>10/17/2023</div>
      <button class="plain ms-1" style="width:24px" aria-label="Notifications"><svg width="22" height="22" stroke="#111"><path d="M1 1h20v16h-7l-3 4-3-4H1z"/></svg></button>
      <span class="ms-3" style="width:6px;height:50px;border-left:1px solid #9fb0be"></span>
    </div>
  </div>
</footer>

<script>
const widths=[35,212,130,88,86,143,94,110,101,4,68,4,114];
const names=['','A','B','C','D','E','F','G','H','','J','','O','P','Q','R','S','T','U','V','W','X','Y','Z','AA','AB','AC','AD','AE','AF','AG','AH'];
while(widths.length<names.length)widths.push(72);
const total=widths.reduce((a,b)=>a+b);
document.querySelector('.xl').style.width=total+'px';
cols.innerHTML=widths.map(w=>`<col style="width:${w}px">`).join('');
letters.innerHTML=names.map((n,i)=>i?`<th scope="col">${n}</th>`:'<th aria-label="Select all"><svg class="ms-3" width="15" height="15"><path d="M15 0v14H0z" fill="#dcdcdc" stroke="none"/></svg></th>').join('');
const last=names.length-1;
const row=(n,html,used,cls='')=>`<tr class="${cls}"><th scope="row">${n}</th>${html}<td class="rest" colspan="${last-used}"></td></tr>`;
const usd=v=>'$'+Math.round(v).toLocaleString('en-US');
let out=`<tr><th scope="row" style="height:27px">1</th><td colspan="2" style="font-size:19px;line-height:25px" class="fw-bold">Debt Schedule</td><td colspan="${last-2}"></td></tr>`;
out+=row(2,'<td class="db"></td><td class="db"></td><td class="db" colspan="2"></td><td class="db"></td><td></td><td class="db" colspan="3"></td>',9);
const sum=(l,v)=>`<td class="n db dr" colspan="2">${l}</td><td class="cur db dr">${v}</td>`;
out+=row(3,'<td class="db dr">Financed Amount</td><td class="cur db dr">$250,000</td>'+sum('Total Interest&nbsp; ','$179,859')+'<td class="dr"></td><td class="inp db dr" colspan="3">Adjust cells in this shade.</td>',9);
out+=row(4,'<td class="db dr">Loan Term</td><td class="n inp db dr">20</td>'+sum('Total Principle','$250,000'),5);
out+=row(5,'<td class="db dr">Annual Interest Rate</td><td class="n inp db dr">6.00%</td>'+sum('Total Paid Back','$429,859'),5);
out+=row(6,'<td class="db dr">Payment per Year</td><td class="n inp db dr">12</td>',2);
out+=row(7,'<td class="db dr">First Payment Date</td><td class="n inp db dr">Jan-23</td><td class="position-relative" style="padding-left:22px"><button class="plain ddl" aria-label="Pick from list"><svg width="8" height="5"><path d="M0 0h8L4 5z" fill="#666" stroke="none"/></svg></button>A</td>',3);
out+=row(8,'',0);
out+=row(9,'<td class="sb"></td>'.repeat(11),11);
out+=row(10,'<td>Payment Number</td><td>PAYMENT</td><td>INTEREST</td><td>PRINCIPAL</td><td>BALANCE</td><td>TOTAL INTEREST</td><td>TOTAL PAID</td><td colspan="2">Rate</td><td colspan="2">Date</td>',11,'head');
out+=row(11,'<td>0</td><td></td><td></td><td></td><td class="cur">$250,000</td>',5);
const mon=['Jan','Feb','Mar','Apr','May','Jun','Jul','Aug','Sep','Oct','Nov','Dec'];
const rate=.06/12,pay=250000*rate/(1-Math.pow(1+rate,-240));
let bal=250000,ti=0;
for(let k=1;k<=35;k++){
  const i=bal*rate,p=pay-i;bal-=p;ti+=i;
  out+=row(k+11,`<td>${k}</td>`+[pay,i,p,bal,ti,pay*k].map(v=>`<td class="cur">${usd(v)}</td>`).join('')+`<td class="n">6.00%</td><td></td><td class="n">${mon[(k-1)%12]}-${23+Math.floor((k-1)/12)}</td>`,10);
}
rows.innerHTML=out;
const tabList=[['Index',''],['Global Control','y'],['Revenue Assumptions','y'],['Schedule',''],['Matrix',''],['Expense Assumptions','y'],['Startup Costs','y'],['Debt Schedule','on'],['Terminal Value','y'],['Cap Ex','y'],['Cap Table','y'],['Monthly Detail','p'],['Annual Detail','p'],['Executive Summary','p'],['Visualizations','p'],['IS- M','g']];
tabs.innerHTML=tabList.map(([t,c])=>`<a href="#" class="stab ${c}"><span>${t}</span></a><span class="sep"></span>`).join('')+'<span style="width:3px;height:30px;background:#808080"></span>';
</script>
</body>
</html>
